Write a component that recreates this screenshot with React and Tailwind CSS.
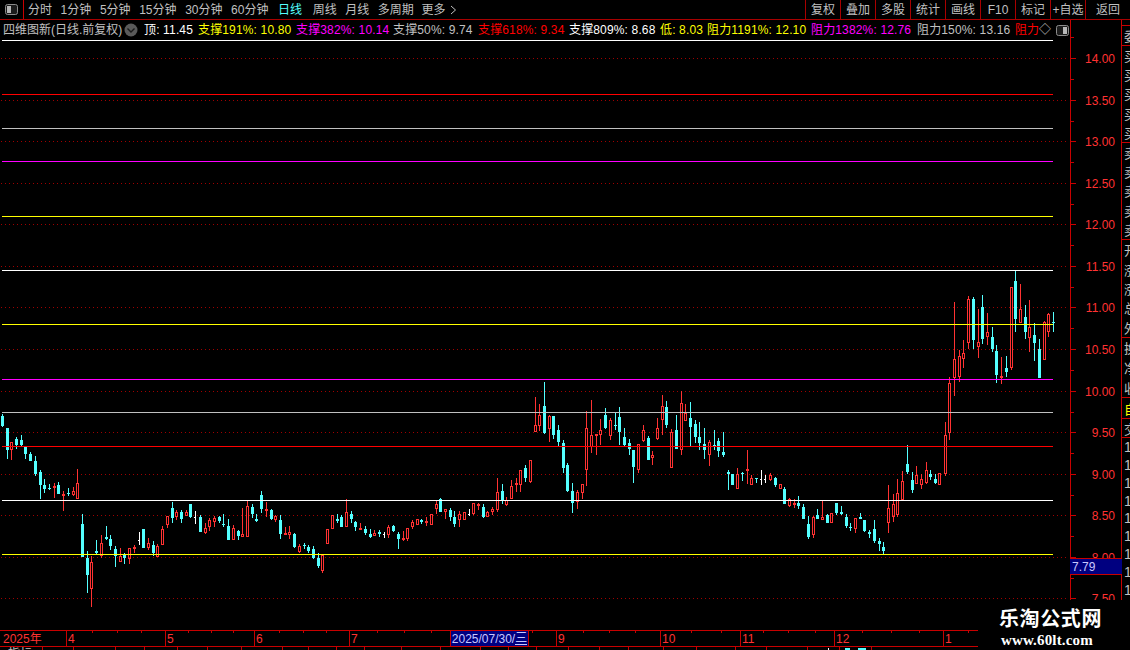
import React from "react";

const CJK = "font-['Liberation_Sans','Noto_Sans_CJK_SC',sans-serif]";

const seg = (ox, oy, rows) => rows.map(([cx, hi, top, bot, lo, t]) => ({
  x: Math.round(ox + cx / 3), hi: Math.round(oy + hi / 3), top: Math.round(oy + top / 3),
  bot: Math.round(oy + bot / 3), lo: Math.round(oy + lo / 3), t,
}));

const candles = [
  ...seg(0, 400, [
    [7,43,48,78,82,0],[22,84,84,150,177,0],[34,127,127,150,180,1],[49,111,118,135,147,0],[64,105,120,135,140,0],[76,138,142,162,177,0],[91,156,162,183,183,0],[106,168,183,222,228,0],[121,210,216,255,297,0],[133,237,255,267,279,0],[148,252,264,268,270,0],[163,250,258,263,294,1],[175,247,255,282,282,0],[190,273,282,284,333,1],[205,264,279,283,288,0],[220,261,274,286,288,1],[232,207,250,297,297,1],[247,342,372,471,471,0],[262,453,474,525,579,0],[274,468,487,567,621,1],[289,420,453,460,462,0],[304,405,430,468,474,1],[319,378,411,417,420,0],[331,405,417,438,450,0],[346,438,447,468,501,0],[361,444,468,486,486,1],[373,459,465,474,492,0],[388,444,445,477,492,1],[403,435,441,445,459,1],[418,396,420,421,435,2],[430,387,387,444,444,0],[445,414,429,444,450,1],[460,423,435,459,468,0],[472,432,438,471,471,1],[487,378,387,435,435,1],[502,348,348,375,384,1],[517,306,324,354,369,0],[529,330,336,351,360,1],[544,330,336,357,369,0],[559,330,336,348,348,1],[571,312,312,351,354,0],[586,333,351,352,372,2],[601,345,351,396,396,0],[616,369,385,399,402,1],[628,354,361,381,393,1],[643,348,354,366,381,1],[658,348,351,363,369,0],[670,342,372,374,381,0],[685,357,378,420,420,0],[700,375,384,420,420,1],[715,390,393,408,420,0],[727,324,402,411,411,1],[742,303,318,411,411,1],[757,312,321,342,354,0],[769,342,357,363,366,0],[784,273,285,327,339,0],[799,306,327,333,351,1],[814,327,330,357,360,0],[826,345,348,360,366,1],[841,345,360,402,417,0],[856,381,400,405,405,1],[868,378,396,405,417,1],[883,399,402,441,444,0],[898,432,438,456,459,1],[913,429,435,438,447,0],[925,435,441,453,459,0],[940,438,447,474,477,0],[955,459,474,498,504,0],[967,465,465,513,519,1],[982,387,387,432,432,1],[997,345,345,387,387,1],[1012,342,357,363,369,0],
  ]),
  ...seg(340, 370, [
    [3,435,441,471,471,0],[19,387,426,471,471,1],[34,423,432,447,459,0],[46,453,456,471,483,0],[61,459,474,480,480,1],[76,468,477,489,495,0],[91,477,492,501,504,0],[103,480,489,498,498,1],[118,480,486,492,501,0],[133,486,492,493,504,2],[145,465,471,495,504,1],[160,465,468,483,486,0],[175,486,492,507,537,0],[190,483,504,510,513,1],[202,474,474,507,513,1],[217,450,456,471,477,1],[232,447,447,465,465,1],[244,447,450,456,462,0],[259,441,453,459,468,1],[274,432,432,465,465,1],[289,393,402,417,432,1],[301,384,387,426,426,0],[316,417,417,426,447,1],[331,414,420,441,453,0],[343,423,441,462,471,0],[358,423,432,450,471,1],[373,426,426,450,450,1],[388,417,432,433,438,2],[400,399,399,432,435,1],[415,399,402,403,420,1],[430,402,411,441,444,0],[442,423,426,441,441,1],[457,411,417,426,435,1],[472,324,366,420,426,1],[487,342,363,393,402,0],[499,381,390,405,408,1],[514,330,348,387,387,1],[529,324,339,345,366,1],[541,300,300,345,366,1],[556,285,294,324,336,0],[571,270,270,336,339,1],[586,81,165,186,186,1],[598,102,135,168,183,1],[613,36,108,189,192,0],[628,135,138,177,216,1],[640,138,138,195,207,0],[655,165,180,216,228,0],[670,210,219,294,309,0],[682,279,285,363,366,0],[697,339,363,399,429,0],[712,360,366,396,417,1],[727,342,342,369,387,1],[739,123,174,300,348,1],[754,90,195,231,249,1],[769,192,192,198,255,1],[781,147,180,195,225,1],[796,114,135,174,177,0],[811,144,150,198,210,1],[826,129,165,168,180,0],[838,111,141,186,225,0],[853,174,201,225,228,0],[868,207,219,237,255,0],[880,240,240,291,339,0],[895,222,222,300,309,1],
  ]),
  ...seg(640, 380, [
    [10,135,150,183,186,1],[25,168,174,240,240,0],[37,213,225,234,255,1],[52,114,144,177,180,1],[67,45,78,120,165,1],[79,63,81,135,144,0],[94,147,156,264,264,1],[109,105,150,207,207,0],[124,33,69,210,225,1],[136,72,99,123,123,1],[151,66,114,141,198,0],[166,120,132,171,189,0],[178,126,171,189,210,0],[193,144,192,210,237,0],[208,180,186,225,258,1],[223,150,195,198,210,0],[235,174,183,213,231,0],[250,156,216,225,231,0],[265,270,276,282,330,0],[277,282,282,315,315,0],[292,264,282,327,327,1],[307,276,279,282,303,0],[322,210,267,273,312,1],[334,285,294,315,315,1],[349,294,294,297,309,0],[364,270,297,298,315,2],[376,285,297,298,309,2],[391,279,285,300,303,1],[406,291,294,315,321,0],[421,312,312,327,327,1],[433,321,327,372,372,0],[448,354,357,378,381,1],[463,357,369,375,384,1],[475,348,369,378,387,0],[490,372,381,417,417,0],[505,408,432,471,477,0],[520,408,411,465,474,1],[532,387,405,417,417,0],[547,363,411,420,420,1],[562,402,405,429,429,0],[574,399,399,429,429,1],[589,369,369,399,405,0],[604,378,396,402,405,0],[619,402,411,438,444,0],[631,429,441,444,453,0],[646,414,414,447,459,1],[661,399,411,417,417,0],[673,420,420,453,456,0],[688,450,456,462,474,0],[703,420,447,483,489,0],[718,474,483,492,513,0],[730,486,501,513,522,0],[745,315,384,429,459,1],[760,342,372,411,426,1],[772,297,339,405,411,1],[787,273,303,360,360,1],[802,195,252,276,282,0],[817,276,300,330,339,0],[829,258,285,312,312,1],[844,282,297,315,327,1],[859,246,270,309,312,1],[871,270,282,291,300,0],[886,282,297,309,312,0],[898,279,279,315,315,1],
  ]),
  ...seg(930, 260, [
    [46,486,525,642,648,1],[58,351,369,519,540,1],[73,126,297,354,408,1],[88,270,288,351,366,1],[100,240,279,297,324,1],[115,108,117,249,267,1],[130,111,117,240,267,0],[145,147,246,261,294,1],[157,105,141,237,252,0],[172,159,216,231,255,1],[187,201,231,267,276,0],[199,255,273,345,369,0],[214,291,348,354,372,1],[229,288,324,336,351,0],[244,81,81,324,330,1],[256,33,63,177,216,0],[271,72,147,189,189,1],[286,135,171,216,237,0],[298,120,201,234,276,1],[313,189,225,249,303,0],[328,237,267,354,354,0],[343,183,186,300,300,1],[355,159,162,216,231,1],[370,156,186,187,216,0],
  ]),
];

const RED = "#ff3232";
const CY = "#54ffff";

function Candle({ c }) {
  const col = c.t === 0 ? CY : c.t === 1 ? RED : "#ffffff";
  if (c.t === 2) {
    return (
      <g fill={col}>
        <rect x={c.x} y={c.hi} width="1" height={c.lo - c.hi} />
        <rect x={c.x - 1} y={c.top} width="1" height="1" />
      </g>
    );
  }
  const h = Math.max(1, c.bot - c.top);
  return (
    <g fill={col}>
      {c.top > c.hi && <rect x={c.x} y={c.hi} width="1" height={c.top - c.hi} />}
      {c.lo > c.bot && <rect x={c.x} y={c.bot} width="1" height={c.lo - c.bot} />}
      {c.t === 0 ? (
        <rect x={c.x - 1} y={c.top} width="3" height={h} />
      ) : (
        <rect x={c.x - 0.5} y={c.top + 0.5} width="2" height={Math.max(1, h - 1)} fill="none" stroke={col} strokeWidth="1" />
      )}
    </g>
  );
}

const levels = [
  [40, "#ffffff"], [94, "#ff0000"], [128, "#c0c0c0"], [161, "#ff00ff"], [216, "#ffff00"], [270, "#ffffff"],
  [324, "#ffff00"], [379, "#ff00ff"], [412, "#c0c0c0"], [446, "#ff0000"], [500, "#ffffff"], [554, "#ffff00"],
];
const prices = [
  ["14.00", 58], ["13.50", 100], ["13.00", 141], ["12.50", 183], ["12.00", 224], ["11.50", 266], ["11.00", 307],
  ["10.50", 349], ["10.00", 391], ["9.50", 432], ["9.00", 474], ["8.50", 515], ["8.00", 557], ["7.50", 598],
];

const tabs = [
  ["分时", "text-[#c0c0c0]"], ["1分钟", "text-[#c0c0c0]"], ["5分钟", "text-[#c0c0c0]"], ["15分钟", "text-[#c0c0c0]"],
  ["30分钟", "text-[#c0c0c0]"], ["60分钟", "text-[#c0c0c0]"], ["日线", "text-[#54ffff] ml-[1px]"], ["周线", "text-[#c0c0c0] ml-[2px]"],
  ["月线", "text-[#c0c0c0]"], ["多周期", "text-[#c0c0c0]"],
];
const tools = ["复权", "叠加", "多股", "统计", "画线", "F10", "标记", "+自选"];

const legend = [
  ["顶: 11.45", "text-white", "w-[54px]"],
  ["支撑191%: 10.80", "text-[#ffff00]", "w-[98px]"],
  ["支撑382%: 10.14", "text-[#ff00ff]", "w-[97px]"],
  ["支撑50%: 9.74", "text-[#c0c0c0]", "w-[85px]"],
  ["支撑618%: 9.34", "text-[#ff0000]", "w-[91px]"],
  ["支撑809%: 8.68", "text-white", "w-[91px]"],
  ["低: 8.03", "text-[#ffff00]", "w-[47px]"],
  ["阻力1191%: 12.10", "text-[#ffff00]", "w-[104px]"],
  ["阻力1382%: 12.76", "text-[#ff00ff]", "w-[106px]"],
  ["阻力150%: 13.16", "text-[#c0c0c0]", "w-[98px]"],
];

const months = [
  ["2025年", "w-[67px] pl-[3px]"], ["4", "w-[99px] pl-[1px]"], ["5", "w-[89px] pl-[1px]"], ["6", "w-[95px] pl-[1px]"],
  ["7", "w-[101px] pl-[1px]"],
];
const months2 = [
  ["", "w-[28px]"], ["9", "w-[104px] pl-[1px]"], ["10", "w-[80px] pl-[1px]"], ["11", "w-[94px] pl-[1px]"],
  ["12", "w-[109px] pl-[1px]"], ["1", "w-[33px] pl-[1px] border-r-0"],
];
const timeTicks = [92, 117, 141, 188, 211, 233, 279, 303, 326, 377, 404, 431, 532, 583, 609, 635, 691, 721, 763, 788, 815, 862, 891, 919, 968];
const lowerTicks = [42, 73, 115, 144, 177, 207, 241, 282, 308, 336, 364, 401, 440, 480, 508, 536, 568, 599, 628, 663, 696, 735, 766, 807, 839, 871];

const strip = [
  ["h-[20px]", ["委"], "text-[#c0c0c0]"],
  ["h-[97px]", ["买", "买", "买", "买", "买"], "text-[#c0c0c0]"],
  ["h-[97px]", ["卖", "卖", "卖", "卖", "卖"], "text-[#c0c0c0]"],
  ["h-[98px]", ["开", "涨", "涨", "总", "外"], "text-[#c0c0c0]"],
  ["h-[60px]", ["换", "净", "收"], "text-[#c0c0c0]"],
  ["h-[21px]", ["自"], "text-[#ffff00]"],
  ["h-[19px]", ["交"], "text-[#c0c0c0]"],
];

function Toggle({ right }) {
  return (
    <svg width="13" height="11" viewBox="0 0 13 11" className="shrink-0">
      <rect x="0.5" y="0.5" width="12" height="10" rx="2" fill="#1c1c1c" stroke="#8c8c8c" />
      <rect x={right ? 7 : 2} y="2" width="4" height="7" fill="#b8b8b8" />
    </svg>
  );
}

export default function App() {
  return (
    <div className={`w-[1130px] h-[650px] bg-black overflow-hidden relative flex flex-col text-[12px] leading-none ${CJK}`}>
      {/* toolbar */}
      <div className="h-[20px] shrink-0 flex border-b border-[#a80000] text-[#c0c0c0]">
        <div className="w-[24px] shrink-0 border-r border-[#c80000] flex items-center justify-center">
          <Toggle />
        </div>
        <div className="flex items-center gap-[8.6px] pl-[4px] flex-1">
          {tabs.map(([t, c]) => (
            <span key={t} className={`${c} whitespace-nowrap`}>{t}</span>
          ))}
          <span className="flex items-center gap-[4px] -ml-[1px] whitespace-nowrap">
            更多
            <svg width="8" height="10" viewBox="0 0 8 10">
              <path d="M2 1 L6.5 5 L2 9" fill="none" stroke="#c0c0c0" />
            </svg>
          </span>
        </div>
        <div className="flex">
          {tools.map((t) => (
            <div key={t} className="w-[35px] border-l border-[#a80000] flex items-center justify-center whitespace-nowrap">{t}</div>
          ))}
          <div className="w-[45px] border-l border-[#a80000] flex items-center justify-center">返回</div>
        </div>
      </div>

      {/* chart + axis */}
      <div className="flex shrink-0 h-[610px]">
        <div className="w-[1070px] shrink-0 flex flex-col">
          <div className="h-[20px] shrink-0 flex items-center pl-[3px] whitespace-nowrap">
            <span className="w-[122px] text-[#c0c0c0] shrink-0">四维图新(日线.前复权)</span>
            <svg width="14" height="14" viewBox="0 0 14 14" className="shrink-0 mr-[6px] -ml-[1px]">
              <circle cx="7" cy="7" r="6.5" fill="#5a5a5a" />
              <path d="M3.5 5.5 L7 9 L10.5 5.5" fill="none" stroke="#1a1a1a" strokeWidth="1.4" />
            </svg>
            {legend.map(([t, c, w]) => (
              <span key={t} className={`${c} ${w} shrink-0 whitespace-pre tracking-[0.15px]`}>{t}</span>
            ))}
            <span className="text-[#ff0000] w-[24px] shrink-0">阻力</span>
            <span className="text-[#c0c0c0] w-[17px] shrink-0">◇</span>
            <Toggle right />
          </div>
          <svg width="1070" height="590" viewBox="0 40 1070 590" shapeRendering="crispEdges" className="block shrink-0">
            {prices.map(([p, y]) => (
              <line key={p} x1="1" x2="1067" y1={y + 0.5} y2={y + 0.5} stroke="#a00000" strokeDasharray="1 3" />
            ))}
            {candles.map((c, i) => (
              <Candle key={i} c={c} />
            ))}
            {levels.map(([y, col]) => (
              <rect key={y} x="2" y={y} width="1051" height="1" fill={col} />
            ))}
          </svg>
        </div>

        {/* price axis + side strip */}
        <div className="h-[580px] shrink-0 flex w-[60px]">
          <div className="relative w-[51px] shrink-0 border-l border-[#c80000]">
            <svg width="50" height="580" viewBox="1071 20 50 580" className="block">
              {prices.map(([p, y]) => (
                <g key={p}>
                  <rect x="1071" y={y} width="5" height="1" fill="#c80000" />
                  <rect x="1071" y={y + 21} width="3" height="1" fill="#c80000" />
                  <text x="1115" y={y + 4.5} textAnchor="end" fill={RED} fontSize="12" fontFamily="'Liberation Sans', sans-serif">{p}</text>
                </g>
              ))}
              <rect x="1071" y="37" width="3" height="1" fill="#c80000" />
            </svg>
            <div className="absolute left-[-1px] top-[538px] w-[52px] h-[17px] bg-[#000080] border-y border-[#c80000] flex items-center pl-[2px] text-[#c8c8ff]">7.79</div>
          </div>
          <div className="w-[9px] shrink-0 border-l border-[#c80000] overflow-hidden flex flex-col text-[13px]">
            <div className="h-[5px] shrink-0" />
            {strip.map(([h, list, c], i) => (
              <div key={i} className={`${h} shrink-0 border-t border-[#c80000] flex flex-col justify-around pl-[2px] ${c} font-['Noto_Sans_CJK_SC',sans-serif]`}>
                {list.map((g, j) => (
                  <span key={j} className="block w-[14px] leading-none">{g}</span>
                ))}
              </div>
            ))}
            <div className="flex-1 border-t border-[#c80000] flex flex-col justify-around pl-[2px] pb-[1px] text-[#c0c0c0] text-[14px] font-['Liberation_Sans',sans-serif]">
              {[0, 1, 2, 3, 4, 5, 6, 7, 8].map((i) => (
                <span key={i} className="block leading-none">1</span>
              ))}
            </div>
          </div>
        </div>
      </div>

      {/* time axis */}
      <div className="relative w-[978px] h-[17px] shrink-0 flex border-y border-[#c80000] text-[#ff3232] items-stretch">
        {months.map(([t, c]) => (
          <div key={t} className={`${c} shrink-0 border-r border-[#c80000] flex items-center`}>{t}</div>
        ))}
        <div className="w-[78px] shrink-0 bg-[#000080] border-r border-[#c80000] flex items-center justify-center text-[#c8c8ff] whitespace-nowrap">
          2025/07/30/<span className="border-b border-[#c8c8ff]">三</span>
        </div>
        {months2.map(([t, c], i) => (
          <div key={i} className={`${c} shrink-0 border-r border-[#c80000] flex items-center`}>{t}</div>
        ))}
        <svg width="978" height="3" className="absolute left-0 top-0">
          {timeTicks.map((x) => (
            <rect key={x} x={x} y="0" width="1" height="2" fill="#c80000" />
          ))}
        </svg>
      </div>
      <div className="relative w-[978px] h-[3px] shrink-0 overflow-hidden text-[#c0c0c0]">
        <svg width="978" height="3" className="absolute left-0 top-0">
          {lowerTicks.map((x) => (
            <rect key={x} x={x} y="0" width="1" height="3" fill="#c80000" />
          ))}
          <rect x="828" y="1" width="1" height="2" fill="#ffffff" />
          <rect x="845" y="1" width="5" height="2" fill="#54ffff" />
          <rect x="858" y="1" width="8" height="2" fill="#54ffff" />
        </svg>
        <span className="absolute left-[8px] top-[1px]">指标</span>
      </div>

      {/* watermark */}
      <div className="absolute left-[978px] top-[600px] w-[152px] h-[50px] bg-black flex flex-col items-start pt-[7px]">
        <span className="ml-[21px] text-white font-bold text-[20px] tracking-[0.6px] leading-[22px] font-['Noto_Sans_CJK_SC',sans-serif]">乐淘公式网</span>
        <span className="ml-[23px] text-white font-bold text-[15px] tracking-[0.15px] leading-[16px] mt-[3px] font-['Liberation_Serif',serif]">www.60lt.com</span>
      </div>
    </div>
  );
}
